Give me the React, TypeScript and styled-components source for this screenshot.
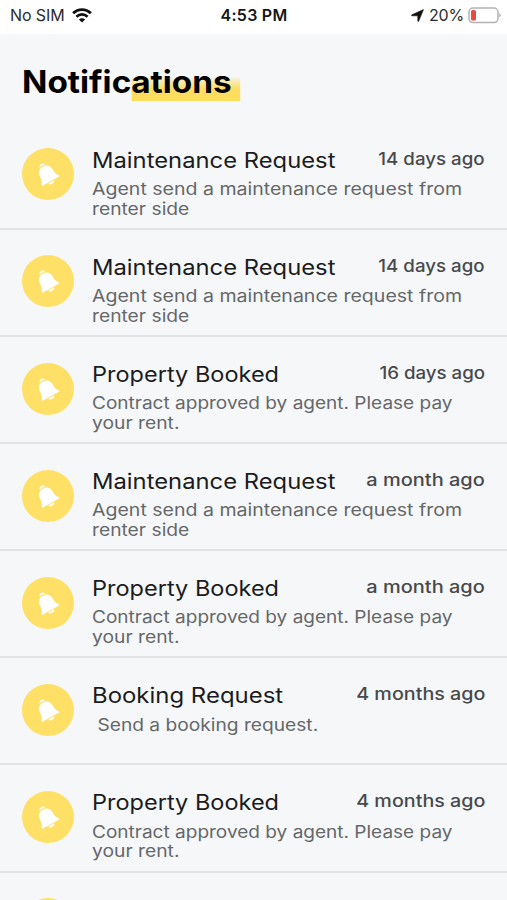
import React from "react";
import styled, { createGlobalStyle } from "styled-components";

const GlobalStyle = createGlobalStyle`
  * { box-sizing: border-box; }
  html, body { margin: 0; background: #f5f7f9; overflow: hidden; }
  body { font-family: Inter, "Open Sans", sans-serif; }
`;

const Screen = styled.div`
  width: 100%;
  height: 900px;
  overflow: hidden;
  background: #f5f7f9;
`;

/* Status bar */

const StatusBar = styled.header`
  display: grid;
  grid-template-columns: 1fr auto 1fr;
  align-items: center;
  height: 34px;
  padding: 0 6px 4px 10px;
  background: #fff;
  color: #2b2b2b;
  font-size: 16px;
  line-height: 20px;
`;

const StatusGroup = styled.div<{ $end?: boolean }>`
  display: flex;
  align-items: center;
  justify-content: ${(p) => (p.$end ? "flex-end" : "flex-start")};
  gap: ${(p) => (p.$end ? "4px" : "7px")};
  svg { display: block; flex: none; }
`;

const Carrier = styled.span`
  letter-spacing: -0.1px;
`;

const Clock = styled.div`
  margin-left: -3px;
  color: #161616;
  font-weight: 600;
  letter-spacing: 0.25px;
`;

const Percent = styled.span`
  margin-left: 1px;
  letter-spacing: -0.2px;
`;

/* Heading */

const HeadingBar = styled.div`
  padding: 29px 22px 0;
  height: 88.8px;
`;

const Heading = styled.h1`
  display: flex;
  margin: 0;
  width: max-content;
  color: #000;
  font-size: 31px;
  font-weight: 700;
  line-height: 38px;
  transform: scaleX(1.075);
  transform-origin: 0 50%;
`;

const Highlighted = styled.span`
  padding-right: 8px;
  background: linear-gradient(
    to bottom,
    rgba(255, 222, 89, 0) 36%,
    rgba(255, 222, 89, 0.35) 44%,
    #fedd62 68%,
    #fedd5a 100%
  ) no-repeat;
`;

/* List */

const List = styled.ul`
  margin: 0;
  padding: 0;
  list-style: none;
`;

const Row = styled.li`
  display: flex;
  align-items: flex-start;
  height: 107.12px;
  padding: 24.8px 22px 0;
  border-bottom: 2px solid #e1e3e5;
`;

const Badge = styled.div`
  display: grid;
  place-items: center;
  flex: none;
  width: 52px;
  height: 52px;
  margin: 0.7px 17.5px 0 0;
  border-radius: 50%;
  background: #ffe067;
  svg { display: block; }
`;

const Content = styled.div`
  flex: 1;
  min-width: 0;
`;

const TitleLine = styled.div`
  display: flex;
  justify-content: space-between;
  height: 26px;
  margin-bottom: 6.4px;
`;

const Title = styled.h2<{ $stretch: number }>`
  margin: 0;
  color: #1c1c1d;
  font-size: 21px;
  font-weight: 400;
  line-height: 26px;
  white-space: nowrap;
  transform: scaleX(${(p) => p.$stretch});
  transform-origin: 0 50%;
`;

const Time = styled.time<{ $stretch: number }>`
  color: #48494b;
  font-size: 17px;
  font-weight: 500;
  line-height: 22px;
  white-space: nowrap;
  transform: scaleX(${(p) => p.$stretch});
  transform-origin: 100% 50%;
`;

const Line = styled.div<{ $stretch: number }>`
  width: max-content;
  margin-left: 0.8px;
  color: #656769;
  font-size: 17px;
  line-height: 19.8px;
  white-space: pre;
  transform: scaleX(${(p) => p.$stretch});
  transform-origin: 0 50%;
`;

type Text = { text: string; stretch: number };
type Kind = { title: Text; lines: Text[] };

const maintenance: Kind = {
  title: { text: "Maintenance Request", stretch: 1.133 },
  lines: [
    { text: "Agent send a maintenance request from", stretch: 1.149 },
    { text: "renter side", stretch: 1.132 },
  ],
};

const booked: Kind = {
  title: { text: "Property Booked", stretch: 1.12 },
  lines: [
    { text: "Contract approved by agent. Please pay", stretch: 1.119 },
    { text: "your rent.", stretch: 1.133 },
  ],
};

const booking: Kind = {
  title: { text: "Booking Request", stretch: 1.14 },
  lines: [{ text: " Send a booking request.", stretch: 1.128 }],
};

const days14: Text = { text: "14 days ago", stretch: 1.1 };
const days16: Text = { text: "16 days ago", stretch: 1.1 };
const month: Text = { text: "a month ago", stretch: 1.175 };
const months4: Text = { text: "4 months ago", stretch: 1.16 };

const notifications: { kind?: Kind; time?: Text }[] = [
  { kind: maintenance, time: days14 },
  { kind: maintenance, time: days14 },
  { kind: booked, time: days16 },
  { kind: maintenance, time: month },
  { kind: booked, time: month },
  { kind: booking, time: months4 },
  { kind: booked, time: months4 },
  {},
];

const WifiIcon = () => (
  <svg width="20" height="15" viewBox="0 0 20 15" fill="none" stroke="#111">
    <path d="M1.1 5.3C6.2.3 13.8.3 18.9 5.3" strokeWidth="2.8" />
    <path d="M4.4 8.7C7.6 5.6 12.4 5.6 15.6 8.7" strokeWidth="2.6" />
    <path d="M10 14.6 6.9 11.4C8.7 9.7 11.3 9.7 13.1 11.4Z" fill="#111" stroke="none" />
  </svg>
);

const LocationIcon = () => (
  <svg width="13" height="13" viewBox="0 0 13 13" fill="#111" stroke="#111" strokeWidth="0.6" strokeLinejoin="round">
    <path d="M12.5.6 7.7 12.1C7.4 12.7 6.8 12.6 6.8 12V6.8H1.1C.4 6.8.3 6.1.9 5.8Z" />
  </svg>
);

const BatteryIcon = () => (
  <svg width="33" height="17" viewBox="0 0 33 17">
    <rect x="1" y="1" width="29" height="14.6" rx="4" fill="#fff" stroke="#b3b3b3" strokeWidth="1.5" />
    <rect x="3" y="3" width="5" height="10.6" rx="1.6" fill="#e8483f" />
    <path d="M31.3 6.2C33.1 6.8 33.1 9.8 31.3 10.4Z" fill="#a9a9a9" />
  </svg>
);

const BellIcon = () => (
  <svg width="52" height="52" viewBox="0 0 52 52" fill="#fff">
    <g transform="translate(28.7 32.9) rotate(-29)">
      <path d="M-10 .2C-9.8-1.6-7.9-3-7.5-5.5L-7.1-10.5C-6.6-14.2-3.8-16.3 0-16.3S6.6-14.2 7.1-10.5L7.5-5.5C7.9-3 9.8-1.6 10 .2Z" />
      <path d="M-3.2-16.9C-2.6-20.2 2.6-20.2 3.2-16.9C1-17.5-1-17.5-3.2-16.9Z" />
      <path d="M-3.3 1.1H3.3C2.9 4.1-2.9 4.1-3.3 1.1Z" />
    </g>
  </svg>
);

export default function App() {
  return (
    <Screen>
      <GlobalStyle />
      <StatusBar>
        <StatusGroup>
          <Carrier>No SIM</Carrier>
          <WifiIcon />
        </StatusGroup>
        <Clock>4:53 PM</Clock>
        <StatusGroup $end>
          <LocationIcon />
          <Percent>20%</Percent>
          <BatteryIcon />
        </StatusGroup>
      </StatusBar>
      <HeadingBar>
        <Heading>
          Notific<Highlighted>ations</Highlighted>
        </Heading>
      </HeadingBar>
      <List>
        {notifications.map(({ kind, time }, i) => (
          <Row key={i}>
            <Badge>
              <BellIcon />
            </Badge>
            {kind && time && (
              <Content>
                <TitleLine>
                  <Title $stretch={kind.title.stretch}>{kind.title.text}</Title>
                  <Time $stretch={time.stretch}>{time.text}</Time>
                </TitleLine>
                {kind.lines.map((l) => (
                  <Line key={l.text} $stretch={l.stretch}>
                    {l.text}
                  </Line>
                ))}
              </Content>
            )}
          </Row>
        ))}
      </List>
    </Screen>
  );
}
